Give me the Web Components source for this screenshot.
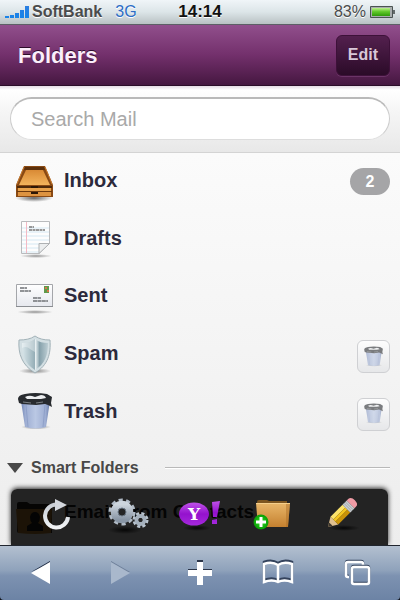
<!DOCTYPE html>
<html lang="en">
<head>
<meta charset="utf-8">
<meta name="viewport" content="width=device-width, initial-scale=1">
<title>Folders</title>
<style>
  html, body { height: 100%; }
  body {
    margin: 0;
    background: #10131a;
    font-family: "Liberation Sans", Arial, sans-serif;
  }
</style>
</head>
<body>
<mail-app></mail-app>

<script>
const icons = {
  inbox: `<svg viewBox="0 0 40 40">
    <defs>
      <linearGradient id="a" x2="0" y2="1"><stop stop-color="#d98a35"/><stop offset="1" stop-color="#f3b45c"/></linearGradient>
      <radialGradient id="s"><stop stop-color="#000" stop-opacity=".6"/><stop offset="1" stop-color="#000" stop-opacity="0"/></radialGradient>
    </defs>
    <ellipse cx="20" cy="36" rx="19" ry="4" fill="url(#s)"/>
    <path d="M10 4h21l8 19v12H2V23z" fill="#8a4a14"/>
    <path d="M11 5h19l1 3H10z" fill="#5b300c"/>
    <path d="M12 8h17l7 15H5z" fill="url(#a)"/>
    <path d="M10 5L3 22M31 5l7 17" stroke="#c87a2c" stroke-width="1"/>
    <path d="M3 24h35v2H3z" fill="#4e2a0b"/>
    <path d="M4 26h33v3H4z" fill="#e8a24b"/>
    <path d="M3 29h35v1H3z" fill="#6b380d"/>
    <path d="M4 30h33v4H4z" fill="#dd9340"/>
    <path d="M17 24h7v2h-7zM17 30h7v2h-7z" fill="#2c1706"/>
  </svg>`,
  drafts: `<svg viewBox="0 0 40 40">
    <defs><radialGradient id="s"><stop stop-color="#000" stop-opacity=".4"/><stop offset="1" stop-color="#000" stop-opacity="0"/></radialGradient></defs>
    <ellipse cx="22" cy="37" rx="16" ry="2" fill="url(#s)"/>
    <path d="M7.500 2.500h28v22L25 34.500H7.500z" fill="#fdfdfd" stroke="#b9bbbd"/>
    <path d="M8 9h27M8 13h27M8 17h27M8 21h27M8 25h18M8 29h17M8 33h17" stroke="#d5e8f3" stroke-width="1"/>
    <path d="M12.500 3v31" stroke="#f3b9c4"/>
    <path d="M15 8h5M15 11h16" stroke="#777" stroke-width="1.300" stroke-dasharray="3 .5"/>
    <path d="M25 34.500v-10h10.500z" fill="#eceeef" stroke="#aeb1b3"/>
  </svg>`,
  sent: `<svg viewBox="0 0 40 40">
    <defs>
      <linearGradient id="a" x2="0" y2="1"><stop stop-color="#fff"/><stop offset="1" stop-color="#e6e8ee"/></linearGradient>
      <radialGradient id="s"><stop stop-color="#000" stop-opacity=".4"/><stop offset="1" stop-color="#000" stop-opacity="0"/></radialGradient>
    </defs>
    <ellipse cx="21" cy="35" rx="18" ry="2" fill="url(#s)"/>
    <path d="M2.500 7.500h36v22h-36z" fill="url(#a)" stroke="#a4a6aa"/>
    <path d="M2 29.500h37" stroke="#8a8d92"/>
    <path d="M6 11h7M6 14h11M19 21h8M19 24h15" stroke="#6f7276" stroke-width="1.300" stroke-dasharray="4 .4"/>
    <path d="M30 9h5v7h-5z" fill="#5f9a4b"/>
    <path d="M31 10h2v2h-2zM33 13h2v2h-2z" fill="#d8774a"/>
  </svg>`,
  spam: `<svg viewBox="0 0 40 40">
    <defs>
      <linearGradient id="l"><stop stop-color="#d9e6ea"/><stop offset="1" stop-color="#94adb6"/></linearGradient>
      <linearGradient id="r"><stop stop-color="#f4f9fa"/><stop offset=".35" stop-color="#86a1ab"/><stop offset="1" stop-color="#bccdd3"/></linearGradient>
      <radialGradient id="s"><stop stop-color="#000" stop-opacity=".45"/><stop offset="1" stop-color="#000" stop-opacity="0"/></radialGradient>
    </defs>
    <ellipse cx="21" cy="36" rx="16" ry="3" fill="url(#s)"/>
    <path d="M21 1c4 3 9 4 15 4 1 14-2 25-15 33C8 30 4 19 5 5c6 0 12-1 16-4z" fill="#d3dfe3" stroke="#a2b2b8"/>
    <path d="M21 4c-4 3-8 4-13 4 0 12 3 21 13 27z" fill="url(#l)"/>
    <path d="M21 4c4 3 8 4 13 4 0 12-3 21-13 27z" fill="url(#r)"/>
    <path d="M8 13c6-3 8 2 13 4V4c-4 3-8 4-13 4z" fill="#fff" opacity=".35"/>
  </svg>`,
  trash: `<svg viewBox="0 0 40 40">
    <defs>
      <linearGradient id="a"><stop stop-color="#7185b3"/><stop offset=".15" stop-color="#9dadd2"/><stop offset=".5" stop-color="#bac8e4"/><stop offset=".85" stop-color="#9dadd2"/><stop offset="1" stop-color="#667aa8"/></linearGradient>
      <radialGradient id="s"><stop stop-color="#000" stop-opacity=".45"/><stop offset="1" stop-color="#000" stop-opacity="0"/></radialGradient>
    </defs>
    <ellipse cx="22" cy="35" rx="15" ry="2.500" fill="url(#s)"/>
    <path d="M7 9h29l-4 26q-10 3-21 0z" fill="url(#a)"/>
    <path d="M12 13l2 22M31 13l-2 22" stroke="#8294c0" stroke-width=".6"/>
    <path d="M4 7q0-4 7-5 10-2 22 0l5 3-1 6 1 4-4-2-3-1-9 1-14-1-3-1z" fill="#282b2f"/>
    <path d="M11 5q4-2 7-1l3 1 6-2q4 0 5 3l-5 1H13z" fill="#eceef0"/>
    <path d="M9 10l8 1M22 11l7-1" stroke="#7c8185"/>
  </svg>`,
  people: `<svg viewBox="0 0 40 40">
    <path d="M3 7q0-2 2-2h8l3 2h20q2 0 2 2v27H5q-2 0-2-2z" fill="#100c06"/>
    <path d="M2 12h36l-1 24q-16 2-33 0z" fill="#b87818"/>
    <path d="M13 34v-5l5-3q-2-2-2-6 1-5 5-5t5 5q0 4-2 6l5 3v5z" fill="#000"/>
  </svg>`,
  reload: `<svg viewBox="0 0 40 40">
    <defs>
      <linearGradient id="a" x2="0" y2="1"><stop stop-color="#c9ced5"/><stop offset="1" stop-color="#f1f3f5"/></linearGradient>
    </defs>
    <path d="M22 8.500A11.500 11.500 0 1 0 33 21" fill="none" stroke="url(#a)" stroke-width="4"/>
    <path d="M20 3l12 6-12 6z" fill="#d3d7dd"/>
  </svg>`,
  gears: `<svg viewBox="0 0 44 40">
    <defs>
      <linearGradient id="a" x2="0" y2="1"><stop stop-color="#cdd5dd"/><stop offset="1" stop-color="#8996a5"/></linearGradient>
      <radialGradient id="s"><stop stop-color="#000" stop-opacity=".8"/><stop offset="1" stop-color="#000" stop-opacity="0"/></radialGradient>
    </defs>
    <ellipse cx="20" cy="34" rx="17" ry="4" fill="url(#s)"/>
    <circle cx="17" cy="16" r="11.500" fill="none" stroke="#b1bbc6" stroke-width="4" stroke-dasharray="4 3.226"/>
    <circle cx="17" cy="16" r="7.500" fill="none" stroke="url(#a)" stroke-width="7.500"/>
    <circle cx="17" cy="16" r="4" fill="#252525" stroke="#6c7986" stroke-width="1"/>
    <circle cx="35.500" cy="24" r="6.500" fill="none" stroke="#b9c4cf" stroke-width="3" stroke-dasharray="3 2.105"/>
    <circle cx="35.500" cy="24" r="4" fill="none" stroke="#a5b1bd" stroke-width="4"/>
    <circle cx="35.500" cy="24" r="2" fill="#252525"/>
  </svg>`,
  yahoo: `<svg viewBox="0 0 44 40">
    <defs>
      <linearGradient id="a" x2="0" y2="1"><stop stop-color="#bf52e8"/><stop offset=".5" stop-color="#9412cd"/><stop offset="1" stop-color="#a529dc"/></linearGradient>
      <radialGradient id="s"><stop stop-color="#000" stop-opacity=".8"/><stop offset="1" stop-color="#000" stop-opacity="0"/></radialGradient>
    </defs>
    <ellipse cx="19" cy="32" rx="14" ry="3" fill="url(#s)"/>
    <ellipse cx="16" cy="18" rx="15" ry="11.500" fill="url(#a)"/>
    <text x="16" y="24" text-anchor="middle" font-family="DejaVu Serif, serif" font-weight="bold" font-size="17" fill="#fff">Y</text>
    <path d="M34 6l8-1-3 16h-4zM34 24l5-1v5h-5z" fill="url(#a)"/>
  </svg>`,
  newfolder: `<svg viewBox="0 0 40 40">
    <defs>
      <linearGradient id="a" x2="0" y2="1"><stop stop-color="#e9b76a"/><stop offset="1" stop-color="#c4802f"/></linearGradient>
      <radialGradient id="g"><stop stop-color="#30e022"/><stop offset="1" stop-color="#089c05"/></radialGradient>
    </defs>
    <path d="M5 8V6q0-2 2-2h8l2 1h18v3z" fill="#7d5620"/>
    <path d="M4 7h34l-2 24H6z" fill="url(#a)"/>
    <path d="M4 7h34v1H4z" fill="#f5cf8b"/>
    <path d="M34 8h4l-2 23h-2z" fill="#a96a24" opacity=".45"/>
    <circle cx="9" cy="26" r="7.500" fill="url(#g)"/>
    <path d="M9 21v10M4 26h10" stroke="#fff" stroke-width="3"/>
  </svg>`,
  pencil: `<svg viewBox="0 0 40 40">
    <defs><radialGradient id="s"><stop stop-color="#000" stop-opacity=".8"/><stop offset="1" stop-color="#000" stop-opacity="0"/></radialGradient></defs>
    <ellipse cx="20" cy="32" rx="16" ry="3" fill="url(#s)"/>
    <g transform="translate(4 31) rotate(-45)">
      <path d="M0 0l9-5.500v11z" fill="#dfc08f"/>
      <path d="M0 0l4-2.400v4.800z" fill="#3c352c"/>
      <path d="M9-5.500h17v4H9z" fill="#fbe36b"/>
      <path d="M9-1.500h17v3H9z" fill="#f4c51f"/>
      <path d="M9 1.500h17v4H9z" fill="#c99208"/>
      <path d="M26-5.500h6v11h-6z" fill="#c9cdd0"/>
      <path d="M28-5.500v11M30-5.500v11" stroke="#94999d" stroke-width=".7"/>
      <path d="M32-5.500h2q4 0 4 5.500t-4 5.500h-2z" fill="#ef9ba5"/>
    </g>
  </svg>`,
  back: `<svg viewBox="0 0 30 30"><path d="M4 14L23 3v3z" fill="#1d2b44"/><path d="M4 15L23 4v22z" fill="#fff"/></svg>`,
  forward: `<svg viewBox="0 0 30 30"><path d="M5 3l19 11H5z" fill="#6c7e98"/><path d="M5 4l19 11L5 26z" fill="#a9b8cc"/></svg>`,
  plus: `<svg viewBox="0 0 30 30"><path d="M12 2h6v9h9v4H3v-4h9z" fill="#2a3448"/><path d="M12 4h6v8h9v6h-9v9h-6v-9H3v-6h9z" fill="#fff"/></svg>`,
  book: `<svg viewBox="0 0 34 30" fill="none">
    <path d="M16 6Q10 2 2 5v18q8-3 14 0 6-3 14 0V5q-8-3-14 1z" stroke="#34435c" stroke-width="2.500" transform="translate(0 -1)"/>
    <path d="M16 7Q10 3 2 6v18q8-3 14 0 6-3 14 0V6q-8-3-14 1v17" stroke="#fff" stroke-width="2.500"/>
  </svg>`,
  pages: `<svg viewBox="0 0 30 30" fill="none" stroke-width="2.500">
    <path d="M6 18H5q-2 0-2-2V5q0-2 2-2h13q2 0 2 2v1" stroke="#34435c"/>
    <path d="M6 19H5q-2 0-2-2V6q0-2 2-2h13q2 0 2 2v1" stroke="#fff"/>
    <rect x="9" y="8" width="17" height="17" rx="2" stroke="#34435c"/>
    <rect x="9" y="9" width="17" height="17" rx="2" stroke="#fff"/>
  </svg>`
};

function attach(el, html) {
  const tmpl = document.createElement('template');
  tmpl.innerHTML = html;
  const root = el.attachShadow({mode: 'open'});
  root.appendChild(tmpl.content.cloneNode(true));
  return root;
}

customElements.define('ui-icon', class extends HTMLElement {
  constructor() {
    super();
    attach(this, `
      <style>
        :host { display: block; flex: none; width: 40px; height: 40px; }
        svg { display: block; width: 100%; height: 100%; }
      </style>
      ${icons[this.getAttribute('name')] || ''}`);
  }
});

customElements.define('status-bar', class extends HTMLElement {
  constructor() {
    super();
    attach(this, `
      <style>
        :host {
          display: grid;
          grid-template-columns: 1fr auto 1fr;
          align-items: center;
          height: 24px;
          padding: 0 4px;
          border-bottom: 1px solid #5d5f66;
          background: linear-gradient(#f0f5f8, #dce5e8 50%, #b9c1c3);
          color: #4a4b4c;
          font-size: 16px;
          text-shadow: 0 1px 0 #fff;
        }
        div { display: flex; align-items: center; }
        .signal { width: 25px; height: 14px; margin-right: 3px; }
        .net { margin-left: 13px; color: #2c6dc6; }
        time { color: #111; font-size: 17px; font-weight: bold; }
        .power { justify-content: flex-end; gap: 4px; }
        .battery { width: 26px; height: 14px; }
      </style>
      <div>
        <svg class="signal" viewBox="0 0 25 14" fill="url(#b)">
          <defs><linearGradient id="b" gradientUnits="userSpaceOnUse" x2="0" y2="14"><stop stop-color="#2d7ee0"/><stop offset="1" stop-color="#1585ea"/></linearGradient></defs>
          <path d="M1 11h4v2H1zM6 10h4v3H6zM11 8h4v5h-4zM16 5h4v8h-4zM21 1h4v12h-4z"/>
        </svg>
        <b>SoftBank</b><span class="net">3G</span>
      </div>
      <time>14:14</time>
      <div class="power">
        <span>83%</span>
        <svg class="battery" viewBox="0 0 26 14">
          <defs><linearGradient id="g" x2="0" y2="1"><stop stop-color="#bdf08c"/><stop offset=".45" stop-color="#62c92c"/><stop offset="1" stop-color="#2f9b0a"/></linearGradient></defs>
          <path d="M.5 1.500h22v11H.5z" fill="#a8adae" stroke="#4a5352"/>
          <path d="M2 3h18v8H2z" fill="url(#g)"/>
          <path d="M23 5h2v4h-2z" fill="#646b6b"/>
        </svg>
      </div>`);
  }
});

customElements.define('title-bar', class extends HTMLElement {
  constructor() {
    super();
    attach(this, `
      <style>
        :host {
          display: flex;
          align-items: center;
          justify-content: space-between;
          height: 60px;
          padding: 0 10px 0 18px;
          border-bottom: 1px solid #2b0d29;
          background: linear-gradient(#914f8c, #73306c 50%, #451740);
        }
        h1 {
          margin: 0;
          padding-top: 2px;
          color: #fbeefa;
          font-size: 22px;
          text-shadow: 0 -1px 0 #2d0c2a;
        }
        button {
          height: 41px;
          padding: 0 11px;
          border: 1px solid #3d1139;
          border-radius: 6px;
          background: linear-gradient(#53204e, #2b0b28);
          box-shadow: 0 1px 0 #6b3467;
          color: #d9c7d8;
          font: bold 16px "Liberation Sans", Arial, sans-serif;
        }
      </style>
      <h1><slot></slot></h1>
      <button type="button">Edit</button>`);
  }
});

customElements.define('search-bar', class extends HTMLElement {
  constructor() {
    super();
    attach(this, `
      <style>
        :host {
          display: block;
          padding: 11px 10px 12px;
          border-bottom: 1px solid #d4d4d4;
          background: linear-gradient(#e4dbe4, #fff 4px, #f5f5f5 40%, #e8e8e8);
        }
        input {
          display: block;
          box-sizing: border-box;
          width: 100%;
          height: 43px;
          padding: 0 20px;
          border: 1px solid #ccc;
          border-top: 2px solid #b9b9b9;
          border-bottom-color: #ddd;
          border-radius: 22px;
          background: #fff;
          color: #333;
          font: 20px "Liberation Sans", Arial, sans-serif;
          outline: none;
        }
        input::placeholder { color: #a9a9a9; opacity: 1; }
      </style>
      <input type="text" placeholder="Search Mail" aria-label="Search Mail">`);
  }
});

customElements.define('folder-row', class extends HTMLElement {
  constructor() {
    super();
    attach(this, `
      <style>
        :host {
          display: flex;
          align-items: center;
          min-height: 56px;
          padding: 0 10px 0 14px;
        }
        a {
          display: flex;
          flex: 1;
          align-items: center;
          gap: 10px;
          color: var(--row-color, #2c2a3c);
          font-size: var(--row-size, 20px);
          font-weight: bold;
          text-decoration: none;
          white-space: nowrap;
        }
        span { padding-bottom: var(--row-lift, 2px); }
      </style>
      <a href="#">
        <ui-icon name="${this.getAttribute('icon')}"></ui-icon>
        <span><slot></slot></span>
      </a>
      <slot name="end"></slot>`);
  }
});

customElements.define('count-badge', class extends HTMLElement {
  constructor() {
    super();
    attach(this, `
      <style>
        :host {
          min-width: 40px;
          border-radius: 14px;
          background: #a5a5a7;
          color: #fff;
          font-size: 16px;
          font-weight: bold;
          line-height: 27px;
          text-align: center;
        }
      </style>
      <slot></slot>`);
  }
});

customElements.define('empty-button', class extends HTMLElement {
  constructor() {
    super();
    attach(this, `
      <style>
        :host { display: block; padding-top: 4px; }
        button {
          display: flex;
          align-items: center;
          justify-content: center;
          width: 33px;
          height: 33px;
          padding: 0 2px 0 0;
          border: 1px solid #cfd0d3;
          border-radius: 6px;
          background: linear-gradient(#fdfdfd, #e6e7e9);
        }
        ui-icon { width: 22px; height: 22px; opacity: .6; }
      </style>
      <button type="button" aria-label="Empty folder"><ui-icon name="trash"></ui-icon></button>`);
  }
});

customElements.define('section-title', class extends HTMLElement {
  constructor() {
    super();
    attach(this, `
      <style>
        :host {
          display: flex;
          align-items: center;
          height: 43px;
          padding: 5px 10px 0 7px;
        }
        .arrow {
          margin-right: 8px;
          border: 8px solid transparent;
          border-top: 10px solid #484848;
          border-bottom: 0;
        }
        h2 { margin: 0 26px 0 0; color: #484848; font-size: 16px; }
        hr {
          flex: 1;
          height: 1px;
          margin: 0;
          border: 0;
          background: #b9b9b9;
          box-shadow: 0 1px 0 #fff;
        }
      </style>
      <span class="arrow"></span>
      <h2><slot></slot></h2>
      <hr>`);
  }
});

customElements.define('action-dock', class extends HTMLElement {
  constructor() {
    super();
    attach(this, `
      <style>
        :host {
          display: flex;
          height: 56px;
          padding: 0 8px;
          border-radius: 6px 6px 0 0;
          background: rgba(5, 5, 5, .87);
          box-shadow: 0 -1px 5px #222;
        }
        button {
          display: flex;
          flex: 1;
          justify-content: center;
          padding: 7px 0 0;
          border: 0;
          background: none;
        }
        .wide { width: 44px; }
      </style>
      <button type="button" aria-label="Refresh"><ui-icon name="reload"></ui-icon></button>
      <button type="button" aria-label="Settings"><ui-icon class="wide" name="gears"></ui-icon></button>
      <button type="button" aria-label="Yahoo"><ui-icon class="wide" name="yahoo"></ui-icon></button>
      <button type="button" aria-label="New folder"><ui-icon name="newfolder"></ui-icon></button>
      <button type="button" aria-label="Compose"><ui-icon name="pencil"></ui-icon></button>`);
  }
});

customElements.define('browser-bar', class extends HTMLElement {
  constructor() {
    super();
    attach(this, `
      <style>
        :host {
          display: flex;
          align-items: center;
          height: 54px;
          padding: 0 3px;
          border-top: 1px solid #20252e;
          border-radius: 0 0 4px 4px;
          background: linear-gradient(#b3c0d0, #8fa2bb 45%, #7d92b1 55%, #6c83a5);
        }
        button {
          display: flex;
          flex: 1;
          justify-content: center;
          padding: 0;
          border: 0;
          background: none;
        }
        ui-icon { width: 30px; height: 30px; }
        .wide { width: 34px; }
      </style>
      <button type="button" aria-label="Back"><ui-icon name="back"></ui-icon></button>
      <button type="button" aria-label="Forward" disabled><ui-icon name="forward"></ui-icon></button>
      <button type="button" aria-label="Add bookmark"><ui-icon name="plus"></ui-icon></button>
      <button type="button" aria-label="Bookmarks"><ui-icon class="wide" name="book"></ui-icon></button>
      <button type="button" aria-label="Pages"><ui-icon name="pages"></ui-icon></button>`);
  }
});

customElements.define('mail-app', class extends HTMLElement {
  constructor() {
    super();
    attach(this, `
      <style>
        :host { display: flex; flex-direction: column; height: 100vh; }
        main {
          position: relative;
          flex: 1;
          min-height: 0;
          overflow: hidden;
          border-radius: 0;
          background: linear-gradient(#fff, #fbfbfb 15%, #ededed);
        }
        /* five rows share the height evenly */
        nav { display: grid; grid-auto-rows: 1fr; min-height: 288px; }
        .smart { --row-size: 19px; --row-color: #000; --row-lift: 10px; }
        /* floats over the list, above the browser bar */
        action-dock { position: absolute; right: 12px; bottom: 0; left: 11px; }
      </style>
      <status-bar></status-bar>
      <title-bar>Folders</title-bar>
      <main>
        <search-bar></search-bar>
        <nav>
          <folder-row icon="inbox">Inbox<count-badge slot="end">2</count-badge></folder-row>
          <folder-row icon="drafts">Drafts</folder-row>
          <folder-row icon="sent">Sent</folder-row>
          <folder-row icon="spam">Spam<empty-button slot="end"></empty-button></folder-row>
          <folder-row icon="trash">Trash<empty-button slot="end"></empty-button></folder-row>
        </nav>
        <section-title>Smart Folders</section-title>
        <folder-row class="smart" icon="people">Email From Contacts</folder-row>
        <action-dock></action-dock>
      </main>
      <browser-bar></browser-bar>`);
  }
});
</script>
</body>
</html>
